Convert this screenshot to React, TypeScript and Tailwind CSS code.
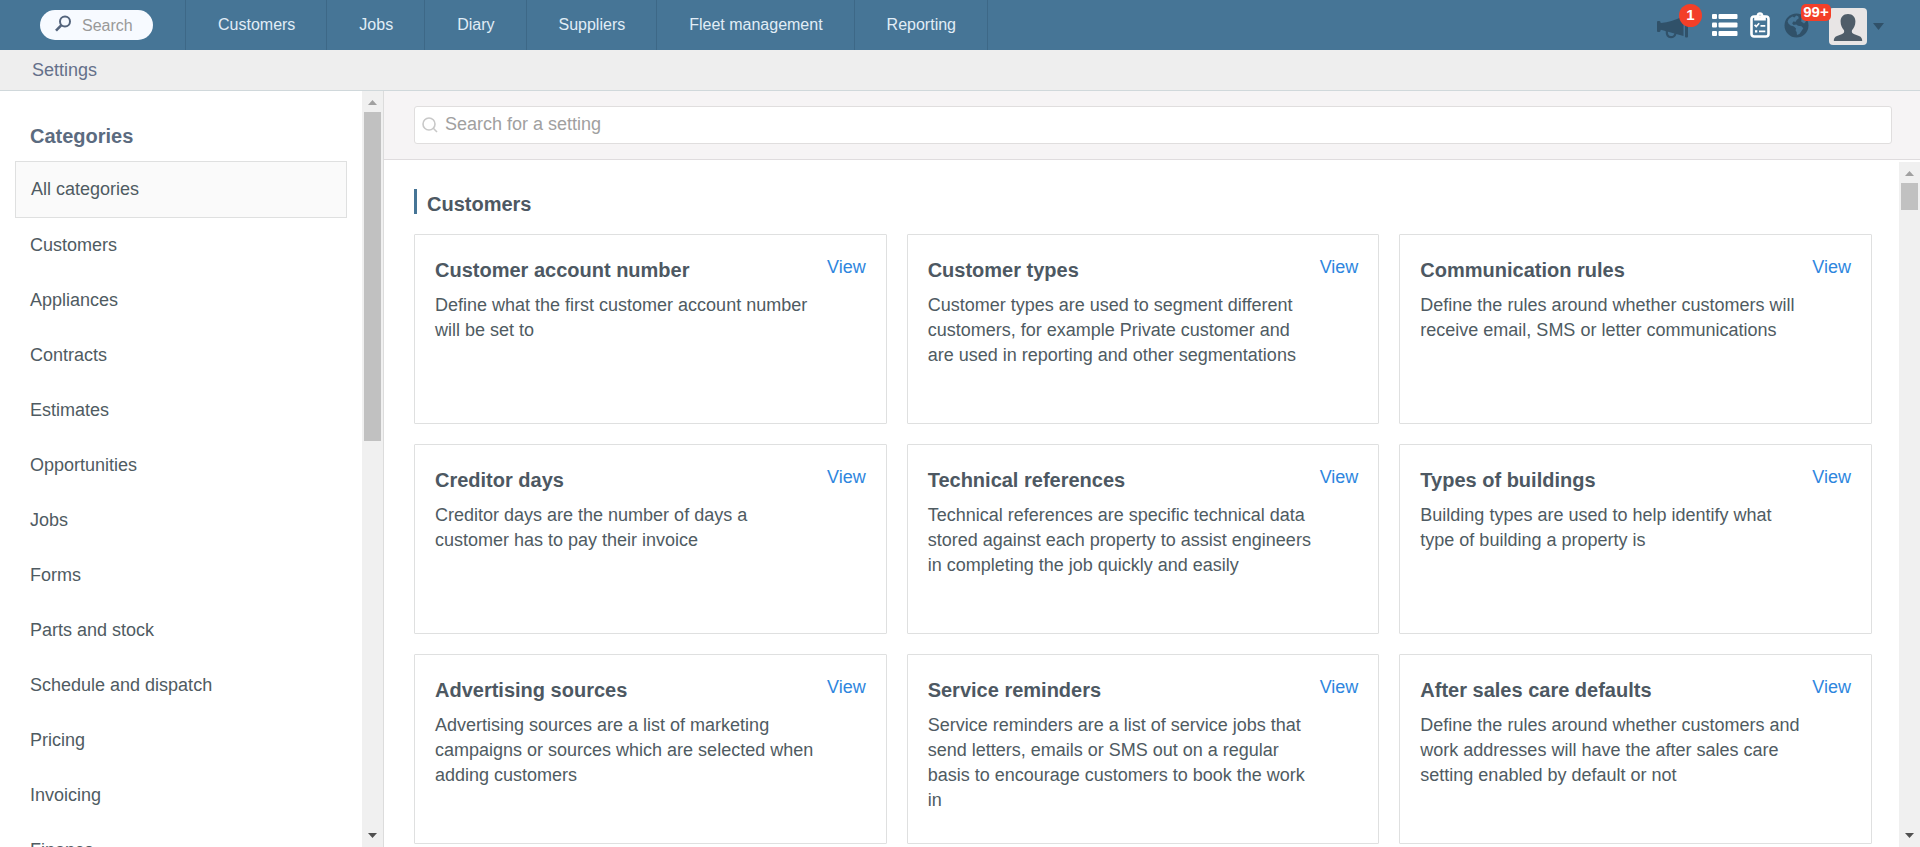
import React from "react";

const navItems = ["Customers", "Jobs", "Diary", "Suppliers", "Fleet management", "Reporting"];

const categories = [
  "All categories",
  "Customers",
  "Appliances",
  "Contracts",
  "Estimates",
  "Opportunities",
  "Jobs",
  "Forms",
  "Parts and stock",
  "Schedule and dispatch",
  "Pricing",
  "Invoicing",
  "Finance",
];

const settings = [
  { title: "Customer account number", text: "Define what the first customer account number will be set to" },
  {
    title: "Customer types",
    text: "Customer types are used to segment different customers, for example Private customer and are used in reporting and other segmentations",
  },
  {
    title: "Communication rules",
    text: "Define the rules around whether customers will receive email, SMS or letter communications",
  },
  { title: "Creditor days", text: "Creditor days are the number of days a customer has to pay their invoice" },
  {
    title: "Technical references",
    text: "Technical references are specific technical data stored against each property to assist engineers in completing the job quickly and easily",
  },
  { title: "Types of buildings", text: "Building types are used to help identify what type of building a property is" },
  {
    title: "Advertising sources",
    text: "Advertising sources are a list of marketing campaigns or sources which are selected when adding customers",
  },
  {
    title: "Service reminders",
    text: "Service reminders are a list of service jobs that send letters, emails or SMS out on a regular basis to encourage customers to book the work in",
  },
  {
    title: "After sales care defaults",
    text: "Define the rules around whether customers and work addresses will have the after sales care setting enabled by default or not",
  },
];

function Scrollbar({ thumb }: { thumb: string }) {
  return (
    <div aria-hidden="true" className="flex w-[21px] shrink-0 flex-col items-center bg-[#f0f0f0]">
      <div className="flex h-[21px] shrink-0 items-center justify-center pt-0.5">
        <svg width="9" height="5" viewBox="0 0 9 5" fill="#a0a0a0">
          <path d="M4.5 0 9 5H0z" />
        </svg>
      </div>
      <div className={`w-[17px] shrink-0 bg-[#c1c1c1] ${thumb}`} />
      <div className="mt-auto flex h-[21px] shrink-0 items-center justify-center pb-0.5">
        <svg width="9" height="5" viewBox="0 0 9 5" fill="#505050">
          <path d="M0 0h9L4.5 5z" />
        </svg>
      </div>
    </div>
  );
}

function TopBar() {
  return (
    <header className="flex h-[50px] shrink-0 items-center bg-[#467596] pr-9 pl-10">
      <label className="mr-8 flex h-[30px] w-[113px] shrink-0 items-center gap-[11px] rounded-full bg-[#f7faff] pl-[15px]">
        <svg width="16" height="17" viewBox="0 0 16 17" fill="none" stroke="#54647c" className="-mt-1 shrink-0">
          <circle cx="10" cy="6.5" r="5" strokeWidth="2" />
          <path d="M6.4 10.2 1 15.7" strokeWidth="2.6" />
        </svg>
        <input
          type="text"
          aria-label="Search"
          placeholder="Search"
          className="w-14 bg-transparent pt-0.5 text-base text-[#555] outline-none placeholder:text-[#999]"
        />
      </label>
      <nav className="flex self-stretch border-r border-[#3d6887]">
        {navItems.map((item) => (
          <a
            key={item}
            href="#"
            className="flex items-center border-l border-[#3d6887] pr-[31px] pl-8 text-base whitespace-nowrap text-[#e1edf6]"
          >
            {item}
          </a>
        ))}
      </nav>
      <div className="ml-auto flex items-center">
        <button type="button" aria-label="Announcements, 1 new" className="relative mt-1 mr-6">
          <svg width="31" height="23" viewBox="0 0 31 23" fill="#305169">
            <path d="M0 6Q0 5 1 5H2.400Q3.400 5 3.800 7 15 6 26.500 0V20L3.800 13.800Q3.400 16 2.400 16H1Q0 16 0 15z" />
            <rect x="28" y="0" width="3" height="21.500" rx="1" />
            <path
              d="M9.800 14.800Q9.400 21.200 14 21.200 17.500 21.200 18.600 17.200"
              fill="none"
              stroke="#305169"
              strokeWidth="2.200"
            />
          </svg>
          <span className="absolute -top-[12px] left-[22px] flex size-[23px] items-center justify-center rounded-full bg-[#f33f28] text-[15px] font-bold text-white">
            1
          </span>
        </button>
        <button type="button" aria-label="List" className="mr-3">
          <svg width="26" height="22" viewBox="0 0 26 22" fill="#fff">
            <rect x="0" y="0" width="5" height="5" rx="1" />
            <rect x="6.500" y="0" width="19" height="5" rx="1" />
            <rect x="0" y="8.500" width="5" height="5" rx="1" />
            <rect x="6.500" y="8.500" width="19" height="5" rx="1" />
            <rect x="0" y="17" width="5" height="5" rx="1" />
            <rect x="6.500" y="17" width="19" height="5" rx="1" />
          </svg>
        </button>
        <button type="button" aria-label="Tasks" className="mr-[14px]">
          <svg width="20" height="26" viewBox="0 0 20 26" fill="none">
            <rect x="1.5" y="4.5" width="17" height="20" rx="2.5" stroke="#fff" strokeWidth="2.6" />
            <path
              fill="#fff"
              fillRule="evenodd"
              d="M4.2 8.4V5.5Q4.2 3.6 6.6 3.6 7 .3 10 .3t3.4 3.3Q15.8 3.6 15.8 5.5V8.4zM10 2.8a1.3 1.3 0 1 0 0 2.6 1.3 1.3 0 0 0 0-2.6z"
            />
            <path d="M4.6 12.8 6.3 14.6 9.2 11.3" stroke="#fff" strokeWidth="1.7" />
            <path d="M10.5 13.8h4.8M9 19.3h6.3" stroke="#fff" strokeWidth="1.8" />
            <rect x="5" y="18.2" width="2.3" height="2.3" fill="#fff" />
          </svg>
        </button>
        <button type="button" aria-label="Notifications, more than 99" className="relative z-10 mr-5">
          <svg width="25" height="25" viewBox="0 0 25 25">
            <circle cx="12.5" cy="12.5" r="12" fill="#305169" />
            <path
              fill="#467596"
              d="M8.2 3.6Q5 5.2 3.6 8.4L4.4 10.6 6.6 12.6 10 13.5 12 15.4 11.6 17.5 12.6 19 13 21.9Q16.3 21 17.4 18.2L19.3 15.2 17.4 13.3 14 12.7 12.3 11.6 9.6 12 8.2 10.4 9.2 8.6 11.8 8.8 12.6 7 14.8 5.2 14.2 3.2 12.2 2.4 10.4 4.6z"
            />
            <path fill="#467596" d="M17.5 3.6 22 8.5 20 10.5 17.2 8.4z" />
          </svg>
          <span className="absolute -top-[9px] left-[17px] flex h-[17px] w-[30px] items-center justify-center rounded-[5px] bg-[#f33f28] text-[15px] font-bold text-white">
            99+
          </span>
        </button>
        <button type="button" aria-label="Account" className="flex items-center gap-1.5 pt-[3px]">
          <svg width="38" height="37" viewBox="0 0 38 37">
            <rect width="38" height="37" rx="4" fill="#e8e5e5" />
            <path
              fill="#4f5d69"
              d="M19 6c4.800 0 7.400 3.200 7.400 7.600 0 3.800-1.600 6.600-3.400 8.600-.6 1.800.2 3.200 2.400 4l4.600 1.800c2.400 1 3.200 2.600 3.200 5H4.800c0-2.400.8-4 3.200-5l4.600-1.800c2.200-.8 3-2.200 2.400-4-1.800-2-3.400-4.800-3.400-8.600C11.600 9.200 14.200 6 19 6z"
            />
          </svg>
          <svg width="11" height="7" viewBox="0 0 11 7" fill="#305169">
            <path d="M0 0h11L5.500 7z" />
          </svg>
        </button>
      </div>
    </header>
  );
}

function Sidebar() {
  return (
    <aside className="flex w-[384px] shrink-0 border-r border-[#dcdcdc]">
      <div className="min-w-0 flex-1 overflow-hidden px-[15px]">
        <h2 className="flex h-[70px] items-end px-[15px] pb-[11px] text-xl font-bold text-[#5b6b80]">Categories</h2>
        <ul>
          {categories.map((name, index) => (
            <li key={name}>
              <a
                href="#"
                className={
                  index === 0
                    ? "flex h-[57px] items-center border border-[#dfe0e0] bg-[#fafafa] px-[15px] pb-0.5 text-lg text-[#4f5b62]"
                    : "flex h-[55px] items-center px-[15px] pb-0.5 text-lg text-[#4f5b62]"
                }
              >
                {name}
              </a>
            </li>
          ))}
        </ul>
      </div>
      <Scrollbar thumb="h-[329px]" />
    </aside>
  );
}

function SettingCard({ title, text }: { title: string; text: string }) {
  return (
    <article className="flex h-[190px] items-start justify-between rounded-[1px] border border-[#dfe0e0] px-5 pt-5">
      <div className="w-[386px]">
        <h3 className="text-xl leading-[30px] font-bold text-[#4d5862]">{title}</h3>
        <p className="mt-2 text-lg leading-[25px] text-[#4f5b62]">{text}</p>
      </div>
      <a href="#" className="text-lg leading-6 text-[#2e86de]">
        View
      </a>
    </article>
  );
}

export default function App() {
  return (
    <div className="flex h-screen flex-col overflow-hidden bg-white font-['Liberation_Sans',Arial,sans-serif]">
      <TopBar />
      <div className="flex h-[41px] shrink-0 items-center border-b border-[#d0d8db] bg-[#eeeeee] px-8 text-lg text-[#64708a]">
        Settings
      </div>
      <div className="flex min-h-0 flex-1">
        <Sidebar />
        <main className="flex min-w-0 flex-1 flex-col">
          <div className="shrink-0 border-b border-[#dfdcde] bg-[#f6f4f5] py-[15px] pr-7 pl-[30px]">
            <label className="flex h-[38px] items-center gap-[7px] rounded-[3px] border border-[#e0dede] bg-white px-[7px]">
              <svg width="16" height="16" viewBox="0 0 16 16" fill="none" stroke="#c8c8c8" strokeWidth="1.600">
                <circle cx="7" cy="7" r="6" />
                <path d="M11.300 11.300 15 15" />
              </svg>
              <input
                type="text"
                aria-label="Search for a setting"
                placeholder="Search for a setting"
                className="min-w-0 flex-1 bg-transparent pb-0.5 text-lg text-[#555] outline-none placeholder:text-[#a0a0a0]"
              />
            </label>
          </div>
          <div className="flex min-h-0 flex-1 pt-0.5">
            <div className="min-w-0 flex-1 overflow-hidden pt-[27px] pr-[27px] pl-[30px]">
              <h2 className="flex h-[25px] items-center border-l-[3px] border-[#467596] pt-1 pl-2.5 text-xl font-bold text-[#4d5862]">
                Customers
              </h2>
              <div className="mt-5 grid grid-cols-3 gap-5">
                {settings.map((setting) => (
                  <SettingCard key={setting.title} title={setting.title} text={setting.text} />
                ))}
              </div>
            </div>
            <Scrollbar thumb="h-[27px]" />
          </div>
        </main>
      </div>
    </div>
  );
}
